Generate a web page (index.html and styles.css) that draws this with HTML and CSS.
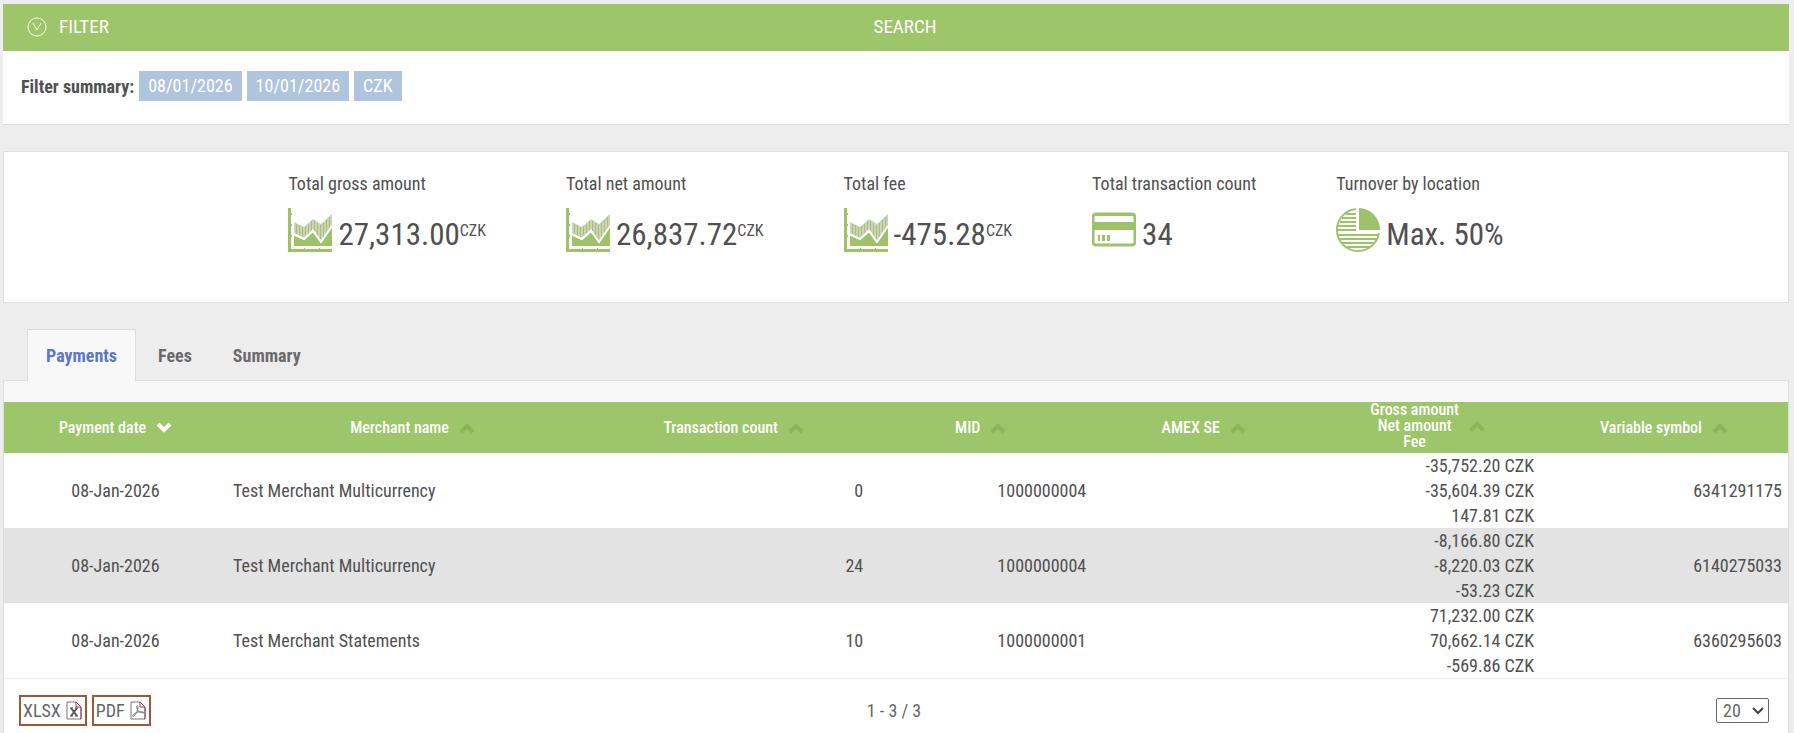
FILE: index.html
```html
<!DOCTYPE html>
<html lang="en">
<head>
    <meta charset="UTF-8">
    <meta name="viewport" content="width=device-width, initial-scale=1.0">
    <title>Payments</title>
    <link rel="stylesheet" href="styles.css">
</head>
<body>
    <!-- shared icons -->
    <svg class="sprite" aria-hidden="true">
        <symbol id="chart" viewBox="0 0 44 44">
            <path fill="#c7d6ab" d="M6 14l10 5 9-8 8 5 11-10v12L33 33l-8-12-9 9-10-5z"/>
            <path stroke="#a9ba8c" stroke-width="1" d="M8.500 16v10M11.500 17v11M14.500 19v10M17.500 18v9M20.500 16v9M23.500 13v9M26.500 13v10M29.500 15v12M32.500 17v14M35.500 15v14M38.500 12v13M41.500 9v12"/>
            <path fill="#9dc269" d="M6 27l10 5 9-8 8 10 11-15v19H6z"/>
            <path fill="none" stroke="#fff" stroke-width="2" d="M5 26l11 5 9-8 8 11 11-16"/>
            <path fill="#9dc269" d="M0 0h3v41h41v3H0zM3 5h1v2H3zM3 16h1v2H3zM3 27h1v2H3zM16 40h1v1h-1zM31 40h1v1h-1z"/>
        </symbol>
        <symbol id="sort" viewBox="0 0 16 12">
            <path fill="none" stroke="currentColor" stroke-width="4" d="M2 10l6-6 6 6"/>
        </symbol>
    </svg>

    <section class="filter">
        <div class="filter-head">
            <button class="filter-toggle">
                <svg width="20" height="20" viewBox="0 0 20 20" fill="none" stroke="currentColor">
                    <circle cx="10" cy="10" r="9"/>
                    <path d="M6 6l4 7 4-7"/>
                </svg>
                FILTER
            </button>
            <button class="search">SEARCH</button>
        </div>
        <div class="filter-summary">
            <b>Filter summary:</b>
            <span class="tag">08/01/2026</span>
            <span class="tag">10/01/2026</span>
            <span class="tag">CZK</span>
        </div>
    </section>

    <section class="totals">
        <div class="total">
            <div class="label">Total gross amount</div>
            <div class="value"><svg class="icon"><use href="#chart"/></svg><span>27,313.00<sup>CZK</sup></span></div>
        </div>
        <div class="total">
            <div class="label">Total net amount</div>
            <div class="value"><svg class="icon"><use href="#chart"/></svg><span>26,837.72<sup>CZK</sup></span></div>
        </div>
        <div class="total">
            <div class="label">Total fee</div>
            <div class="value"><svg class="icon"><use href="#chart"/></svg><span>-475.28<sup>CZK</sup></span></div>
        </div>
        <div class="total">
            <div class="label">Total transaction count</div>
            <div class="value">
                <svg class="icon" viewBox="0 0 44 44">
                    <rect x="1" y="6" width="42" height="31" rx="3" fill="#fff" stroke="#9dc269" stroke-width="3"/>
                    <path fill="#9dc269" d="M2 5h40v3H2zM2 14h40v8H2zM6 27h2v6H6zM10 27h3v6h-3zM15 27h3v6h-3z"/>
                </svg>
                <span>34</span>
            </div>
        </div>
        <div class="total">
            <div class="label">Turnover by location</div>
            <div class="value">
                <svg class="icon" viewBox="0 0 44 44">
                    <circle cx="22" cy="22" r="21" fill="#fff" stroke="#9dc269" stroke-width="2"/>
                    <path stroke="#9dc269" stroke-width="2" d="M10 6h10M6 10h14M4 14h16M2 18h18M2 22h18M2 27h40M3 31h38M6 35h32M9 39h26"/>
                    <path fill="#fff" d="M20 0h24v25H20z"/>
                    <path fill="#9dc269" d="M23 0a21 22 0 0 1 21 22H23z"/>
                </svg>
                <span>Max. 50%</span>
            </div>
        </div>
    </section>

    <nav class="tabs">
        <a href="#payments" class="active">Payments</a>
        <a href="#fees">Fees</a>
        <a href="#summary">Summary</a>
    </nav>

    <section class="panel" id="payments">
        <table>
            <colgroup>
                <col class="col-date">
                <col class="col-name">
                <col class="col-count">
                <col class="col-mid">
                <col class="col-amex">
                <col class="col-amount">
                <col class="col-symbol">
            </colgroup>
            <thead>
                <tr>
                    <th><div class="th"><span>Payment date</span><svg class="sort desc"><use href="#sort"/></svg></div></th>
                    <th><div class="th"><span>Merchant name</span><svg class="sort"><use href="#sort"/></svg></div></th>
                    <th><div class="th"><span>Transaction count</span><svg class="sort"><use href="#sort"/></svg></div></th>
                    <th><div class="th"><span>MID</span><svg class="sort"><use href="#sort"/></svg></div></th>
                    <th><div class="th"><span>AMEX SE</span><svg class="sort"><use href="#sort"/></svg></div></th>
                    <th class="multi"><div class="th"><span>Gross amount<br>Net amount<br>Fee</span><svg class="sort"><use href="#sort"/></svg></div></th>
                    <th><div class="th"><span>Variable symbol</span><svg class="sort"><use href="#sort"/></svg></div></th>
                </tr>
            </thead>
            <tbody>
                <tr>
                    <td class="center">08-Jan-2026</td>
                    <td>Test Merchant Multicurrency</td>
                    <td class="right">0</td>
                    <td class="right">1000000004</td>
                    <td></td>
                    <td class="right">-35,752.20 CZK<br>-35,604.39 CZK<br>147.81 CZK</td>
                    <td class="right">6341291175</td>
                </tr>
                <tr>
                    <td class="center">08-Jan-2026</td>
                    <td>Test Merchant Multicurrency</td>
                    <td class="right">24</td>
                    <td class="right">1000000004</td>
                    <td></td>
                    <td class="right">-8,166.80 CZK<br>-8,220.03 CZK<br>-53.23 CZK</td>
                    <td class="right">6140275033</td>
                </tr>
                <tr>
                    <td class="center">08-Jan-2026</td>
                    <td>Test Merchant Statements</td>
                    <td class="right">10</td>
                    <td class="right">1000000001</td>
                    <td></td>
                    <td class="right">71,232.00 CZK<br>70,662.14 CZK<br>-569.86 CZK</td>
                    <td class="right">6360295603</td>
                </tr>
            </tbody>
        </table>
        <div class="pager">
            <div class="exports">
                <button class="export">
                    XLSX
                    <svg width="16" height="19" viewBox="0 0 16 19" fill="none" stroke="#777">
                        <path d="M1 1h9l5 5v12H1z"/>
                        <path stroke="#a33c5c" d="M10 1v5h5M10 1l5 5v12"/>
                        <path stroke="#555" stroke-width="2" d="M5 7l6 8M11 7l-6 8"/>
                        <path stroke="#555" d="M4 7h3M9 7h3M4 15h3M9 15h3"/>
                    </svg>
                </button>
                <button class="export">
                    PDF
                    <svg width="16" height="19" viewBox="0 0 16 19" fill="none" stroke="#777">
                        <path d="M1 1h9l5 5v12H1z"/>
                        <path stroke="#a33c5c" d="M10 1v5h5M10 1l5 5v12"/>
                        <path d="M7 5c-1 3 2 7 6 7 1 0 1-1 0-1-4-1-8 1-10 3-1 1 0 2 1 1 2-2 4-6 4-9 0-1-1-2-1-1z"/>
                    </svg>
                </button>
            </div>
            <div class="range">1 - 3 / 3</div>
            <div class="page-size">
                <select aria-label="Rows per page">
                    <option>10</option>
                    <option selected>20</option>
                    <option>50</option>
                </select>
                <svg class="arrow" width="12" height="8" viewBox="0 0 12 8" fill="none" stroke="#444" stroke-width="2"><path d="M1 1l5 5 5-5"/></svg>
            </div>
        </div>
    </section>
</body>
</html>
```
FILE: styles.css
```css
* {
    box-sizing: border-box;
}
body {
    margin: 0;
    padding: 4px 5px 0 3px;
    background-color: #ededed;
    color: #505050;
    font-family: 'Roboto Condensed', 'Liberation Sans Narrow', Roboto, sans-serif;
    font-size: 18px;
    line-height: 25px;
}
button, select {
    font: inherit;
    color: inherit;
}
.sprite {
    display: none;
}

/* filter */
.filter {
    background-color: #fff;
    border-bottom: 1px solid #dcdcdc;
}
.filter-head {
    display: grid;
    grid-template-columns: 1fr auto 1fr;
    align-items: center;
    height: 47px;
    padding: 0 6px 2px 24px;
    background-color: #9dc56a;
    color: #fff;
    font-size: 19px;
}
.filter-head button {
    padding: 0;
    border: 0;
    background: none;
    cursor: pointer;
}
.filter-toggle {
    display: flex;
    align-items: center;
    gap: 12px;
}
.filter-summary {
    display: flex;
    align-items: center;
    gap: 5px;
    padding: 20px 18px 23px;
}
.tag {
    padding: 2px 9px 3px;
    background-color: #b0c4de;
    color: #fff;
}

/* totals */
.totals {
    display: flex;
    justify-content: center;
    gap: 80px;
    margin-top: 26px;
    padding: 19px 0 47px;
    background-color: #fff;
    border: 1px solid #e0e0e0;
}
.value {
    display: flex;
    gap: 6px;
    height: 47px;
    margin-top: 12px;
    font-size: 31px;
    line-height: 54px;
}
.icon {
    width: 44px;
    height: 44px;
}
.value sup {
    font-size: 16px;
    line-height: 0;
    vertical-align: 9px;
}

/* tabs */
.tabs {
    display: flex;
    gap: 3px;
    margin-top: 26px;
    padding-left: 24px;
}
.tabs a {
    padding: 13px 18px 12px;
    border: 1px solid transparent;
    border-bottom: 0;
    color: #6a6a6a;
    font-weight: bold;
    text-decoration: none;
}
.tabs .active {
    margin-bottom: -1px;
    padding-bottom: 13px;
    background-color: #f8f8f8;
    border-color: #dcdcdc;
    color: #5b78c7;
    z-index: 1;
}

/* table */
.panel {
    padding-top: 21px;
    background-color: #f8f8f8;
    border: 1px solid #dcdcdc;
    border-bottom: 0;
}
table {
    width: 100%;
    table-layout: fixed;
    border-collapse: collapse;
    background-color: #fff;
}
.col-date { width: 12.5%; }
.col-name { width: 20.8%; }
.col-count { width: 15.2%; }
.col-mid { width: 12.5%; }
.col-amex { width: 12.5%; }
.col-amount { width: 12.6%; }
.col-symbol { width: 13.9%; }
th {
    height: 51px;
    padding: 0;
    background-color: #9dc56a;
    color: #fff;
    font-size: 16px;
    font-weight: 500;
    line-height: 16px;
}
.multi {
    vertical-align: top;
}
.th {
    display: flex;
    justify-content: center;
    align-items: center;
    gap: 10px;
}
.sort {
    width: 16px;
    height: 12px;
    color: #8ab558;
}
.desc {
    color: #fff;
    transform: rotate(180deg);
}
td {
    height: 75px;
    padding: 0 6px;
}
tbody tr:nth-child(even) {
    background-color: #e3e3e3;
}
.center {
    text-align: center;
}
.right {
    text-align: right;
}

/* pager */
.pager {
    display: grid;
    grid-template-columns: 1fr auto 1fr;
    align-items: center;
    padding: 16px 19px 14px 15px;
    background-color: #fff;
    border-top: 1px solid #ececec;
    color: #666;
}
.exports {
    display: flex;
    gap: 5px;
}
.export {
    display: flex;
    align-items: center;
    gap: 5px;
    padding: 1px 3px 1px 2px;
    border: 2px solid #9b5a35;
    background-color: #fff;
}
.page-size {
    display: flex;
    justify-content: flex-end;
    align-items: center;
}
.page-size select {
    appearance: none;
    width: 53px;
    height: 25px;
    padding: 0 6px;
    border: 1px solid #666;
    border-radius: 2px;
    background-color: #fff;
    line-height: 22px;
}
.arrow {
    margin: 0 5px 0 -17px;
    pointer-events: none;
}
```
